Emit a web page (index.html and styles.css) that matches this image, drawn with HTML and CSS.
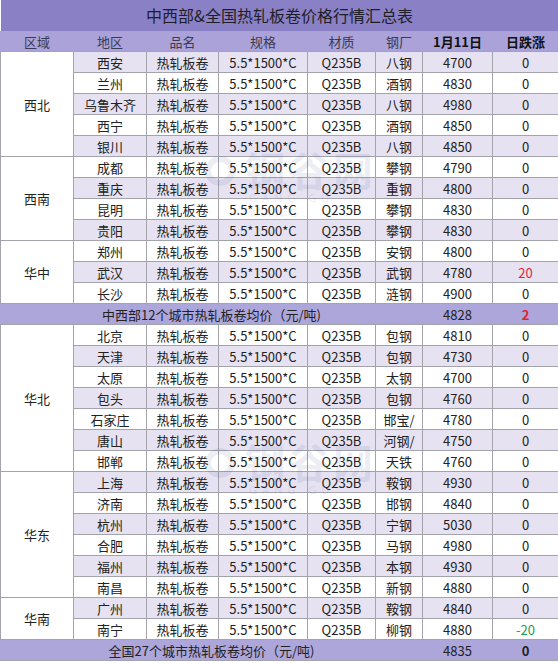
FILE: index.html
```html
<!DOCTYPE html>
<html lang="zh">
<head>
<meta charset="utf-8">
<link rel="stylesheet" href="styles.css">
</head>
<body>
<div class="wrap">
<table class="sheet">
<colgroup>
<col class="c1"><col class="c2"><col class="c3"><col class="c4"><col class="c5"><col class="c6"><col class="c7"><col class="c8">
</colgroup>
<thead>
<tr class="title"><th colspan="8">中西部&amp;全国热轧板卷价格行情汇总表</th></tr>
<tr class="head"><th>区域</th><th>地区</th><th>品名</th><th>规格</th><th>材质</th><th>钢厂</th><th class="strong">1月11日</th><th class="strong">日跌涨</th></tr>
</thead>
<tbody>
<tr class="s"><td class="region" rowspan="5">西北</td><td>西安</td><td>热轧板卷</td><td>5.5*1500*C</td><td>Q235B</td><td>八钢</td><td>4700</td><td>0</td></tr>
<tr><td>兰州</td><td>热轧板卷</td><td>5.5*1500*C</td><td>Q235B</td><td>酒钢</td><td>4830</td><td>0</td></tr>
<tr class="s"><td>乌鲁木齐</td><td>热轧板卷</td><td>5.5*1500*C</td><td>Q235B</td><td>八钢</td><td>4980</td><td>0</td></tr>
<tr><td>西宁</td><td>热轧板卷</td><td>5.5*1500*C</td><td>Q235B</td><td>酒钢</td><td>4850</td><td>0</td></tr>
<tr class="s"><td>银川</td><td>热轧板卷</td><td>5.5*1500*C</td><td>Q235B</td><td>八钢</td><td>4850</td><td>0</td></tr>
<tr><td class="region" rowspan="4">西南</td><td>成都</td><td>热轧板卷</td><td>5.5*1500*C</td><td>Q235B</td><td>攀钢</td><td>4790</td><td>0</td></tr>
<tr class="s"><td>重庆</td><td>热轧板卷</td><td>5.5*1500*C</td><td>Q235B</td><td>重钢</td><td>4800</td><td>0</td></tr>
<tr><td>昆明</td><td>热轧板卷</td><td>5.5*1500*C</td><td>Q235B</td><td>攀钢</td><td>4830</td><td>0</td></tr>
<tr class="s"><td>贵阳</td><td>热轧板卷</td><td>5.5*1500*C</td><td>Q235B</td><td>攀钢</td><td>4830</td><td>0</td></tr>
<tr><td class="region" rowspan="3">华中</td><td>郑州</td><td>热轧板卷</td><td>5.5*1500*C</td><td>Q235B</td><td>安钢</td><td>4800</td><td>0</td></tr>
<tr class="s"><td>武汉</td><td>热轧板卷</td><td>5.5*1500*C</td><td>Q235B</td><td>武钢</td><td>4780</td><td class="up">20</td></tr>
<tr><td>长沙</td><td>热轧板卷</td><td>5.5*1500*C</td><td>Q235B</td><td>涟钢</td><td>4900</td><td>0</td></tr>
<tr class="sum"><td colspan="6">中西部12个城市热轧板卷均价（元/吨)</td><td>4828</td><td class="up bold">2</td></tr>
<tr><td class="region" rowspan="7">华北</td><td>北京</td><td>热轧板卷</td><td>5.5*1500*C</td><td>Q235B</td><td>包钢</td><td>4810</td><td>0</td></tr>
<tr class="s"><td>天津</td><td>热轧板卷</td><td>5.5*1500*C</td><td>Q235B</td><td>包钢</td><td>4730</td><td>0</td></tr>
<tr><td>太原</td><td>热轧板卷</td><td>5.5*1500*C</td><td>Q235B</td><td>太钢</td><td>4700</td><td>0</td></tr>
<tr class="s"><td>包头</td><td>热轧板卷</td><td>5.5*1500*C</td><td>Q235B</td><td>包钢</td><td>4760</td><td>0</td></tr>
<tr><td>石家庄</td><td>热轧板卷</td><td>5.5*1500*C</td><td>Q235B</td><td>邯宝/</td><td>4780</td><td>0</td></tr>
<tr class="s"><td>唐山</td><td>热轧板卷</td><td>5.5*1500*C</td><td>Q235B</td><td>河钢/</td><td>4750</td><td>0</td></tr>
<tr><td>邯郸</td><td>热轧板卷</td><td>5.5*1500*C</td><td>Q235B</td><td>天铁</td><td>4760</td><td>0</td></tr>
<tr class="s"><td class="region" rowspan="6">华东</td><td>上海</td><td>热轧板卷</td><td>5.5*1500*C</td><td>Q235B</td><td>鞍钢</td><td>4930</td><td>0</td></tr>
<tr><td>济南</td><td>热轧板卷</td><td>5.5*1500*C</td><td>Q235B</td><td>邯钢</td><td>4840</td><td>0</td></tr>
<tr class="s"><td>杭州</td><td>热轧板卷</td><td>5.5*1500*C</td><td>Q235B</td><td>宁钢</td><td>5030</td><td>0</td></tr>
<tr><td>合肥</td><td>热轧板卷</td><td>5.5*1500*C</td><td>Q235B</td><td>马钢</td><td>4980</td><td>0</td></tr>
<tr class="s"><td>福州</td><td>热轧板卷</td><td>5.5*1500*C</td><td>Q235B</td><td>本钢</td><td>4930</td><td>0</td></tr>
<tr><td>南昌</td><td>热轧板卷</td><td>5.5*1500*C</td><td>Q235B</td><td>新钢</td><td>4880</td><td>0</td></tr>
<tr class="s"><td class="region" rowspan="2">华南</td><td>广州</td><td>热轧板卷</td><td>5.5*1500*C</td><td>Q235B</td><td>鞍钢</td><td>4840</td><td>0</td></tr>
<tr><td>南宁</td><td>热轧板卷</td><td>5.5*1500*C</td><td>Q235B</td><td>柳钢</td><td>4880</td><td class="down">-20</td></tr>
<tr class="sum"><td colspan="6">全国27个城市热轧板卷均价（元/吨)</td><td>4835</td><td class="bold">0</td></tr>
</tbody>
</table>
<div class="mark mark1"><span class="ring"></span><span class="mk">钢谷网</span><span class="mk-en">GANG GU WANG</span></div>
<div class="mark mark2"><span class="ring"></span><span class="mk">钢谷网</span><span class="mk-en">GANG GU WANG</span></div>
</div>
</body>
</html>
```
FILE: styles.css
```css
html, body {
  margin: 0;
  padding: 0;
  background: #ffffff;
}
.wrap {
  position: relative;
  width: 558px;
}
.sheet {
  width: 558px;
  table-layout: fixed;
  border-collapse: collapse;
  font-family: "Noto Sans CJK SC", "Noto Sans", sans-serif;
  font-size: 13px;
  color: #222222;
}
.c1 { width: 73px; }
.c2 { width: 73px; }
.c3 { width: 72px; }
.c4 { width: 89px; }
.c5 { width: 68px; }
.c6 { width: 47px; }
.c7 { width: 70px; }
.c8 { width: 66px; }
.sheet th, .sheet td {
  padding: 0;
  text-align: center;
  white-space: nowrap;
  overflow: hidden;
  line-height: 19px;
}
.sheet td {
  height: 20px;
  border: 1px solid #a3a3ab;
}
.title th {
  height: 31px;
  background: #8a80c6;
  font-size: 16px;
  font-weight: normal;
  color: #1e1e28;
  line-height: 31px;
}
.head th {
  height: 20px;
  background: #aaa2d9;
  font-weight: normal;
  color: #3c3b52;
  border-left: 1px solid #aaa2d9;
  border-right: 1px solid #aaa2d9;
}
.head th.strong {
  font-weight: bold;
  color: #111111;
}
tr.s td {
  background: #e6e2f2;
}
tr.s td.region, td.region {
  background: #ffffff;
}
tr.sum td {
  background: #ada6db;
  border-left-color: #ada6db;
  border-right-color: #ada6db;
}
.up { color: #e2252f; }
.down { color: #1e9e52; }
.bold { font-weight: bold; }
.mark {
  position: absolute;
  left: 205px;
  width: 180px;
  height: 56px;
  pointer-events: none;
  opacity: 0.09;
  color: #3a4a8a;
  font-family: "Noto Sans CJK SC", sans-serif;
}
.mark1 { top: 150px; }
.mark2 { top: 442px; }
.ring {
  position: absolute;
  left: 0;
  top: 6px;
  width: 30px;
  height: 30px;
  border: 6px solid #3a4a8a;
  border-radius: 50%;
  box-sizing: border-box;
}
.mk {
  position: absolute;
  left: 40px;
  top: -4px;
  font-size: 40px;
  font-weight: bold;
  line-height: 46px;
  letter-spacing: 4px;
}
.mk-en {
  position: absolute;
  left: 44px;
  top: 40px;
  font-size: 11px;
  letter-spacing: 5px;
  font-family: "Noto Sans", sans-serif;
}
```
